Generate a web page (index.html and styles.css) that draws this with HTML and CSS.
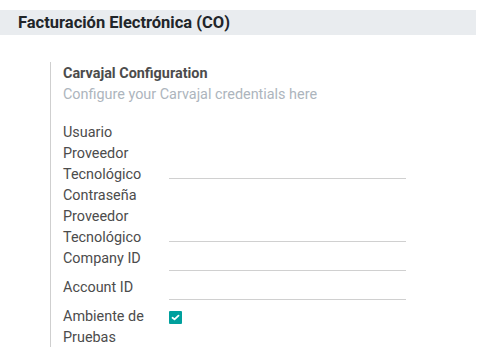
FILE: index.html
```html
<!DOCTYPE html>
<html>
<head>
<meta charset="utf-8">
<link rel="stylesheet" href="styles.css">
</head>
<body>
<div class="app-header">Facturación Electrónica (CO)</div>
<div class="setting-box">
  <div class="setting-title">Carvajal Configuration</div>
  <div class="setting-help">Configure your Carvajal credentials here</div>
  <div class="form-group">
    <div class="field-label">Usuario Proveedor Tecnológico</div>
    <div class="field-input"></div>
    <div class="field-label">Contraseña Proveedor Tecnológico</div>
    <div class="field-input"></div>
    <div class="field-label">Company ID</div>
    <div class="field-input"></div>
    <div class="field-label">Account ID</div>
    <div class="field-input"></div>
    <div class="field-label">Ambiente de Pruebas</div>
    <div class="field-check">
      <span class="checkbox">
        <svg width="13" height="13" viewBox="0 0 13 13"><path d="M3.5 6.8 L5.5 8.4 L9.5 4.6" fill="none" stroke="#fff" stroke-width="1.8" stroke-linecap="round" stroke-linejoin="round"/></svg>
      </span>
    </div>
  </div>
</div>
</body>
</html>
```
FILE: styles.css
```css
html, body {
  margin: 0;
  padding: 0;
  background: #fff;
  font-family: Roboto, "Noto Sans", sans-serif;
  font-size: 14.4px;
  color: #4c4c4c;
}

.app-header {
  margin-top: 10px;
  margin-right: 1px;
  height: 25px;
  line-height: 25px;
  background: #e9ecef;
  padding-left: 18px;
  font-size: 16.5px;
  font-weight: 700;
  color: #212529;
}

.setting-box {
  margin-top: 27px;
  margin-left: 50px;
  border-left: 1px solid #cfcfcf;
  padding-left: 12px;
  padding-top: 1px;
  height: 285px;
  box-sizing: border-box;
}

.setting-title {
  font-weight: 700;
  line-height: 21px;
  color: #4c4c4c;
}

.setting-help {
  line-height: 21px;
  color: #adb5bd;
}

.form-group {
  margin-top: 17px;
  display: grid;
  grid-template-columns: 106px 237px;
}

.field-label {
  line-height: 21px;
  padding-right: 10px;
  color: #4c4c4c;
}

.field-input {
  align-self: end;
  height: 23px;
  margin-bottom: 6px;
  border-bottom: 1px solid #d0d0d0;
  box-sizing: border-box;
}

.field-check {
  padding-top: 5px;
}

.checkbox {
  display: block;
  width: 13px;
  height: 13px;
  background: #00a09d;
  border-radius: 1px;
}

.checkbox svg {
  display: block;
}
```
